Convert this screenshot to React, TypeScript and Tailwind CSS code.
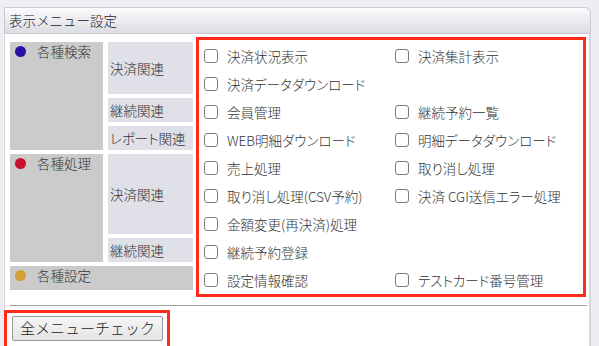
import React from "react";

type Item = { label: string } | null;

const rows: [Item, Item][] = [
  [{ label: "決済状況表示" }, { label: "決済集計表示" }],
  [{ label: "決済データダウンロード" }, null],
  [{ label: "会員管理" }, { label: "継続予約一覧" }],
  [{ label: "WEB明細ダウンロード" }, { label: "明細データダウンロード" }],
  [{ label: "売上処理" }, { label: "取り消し処理" }],
  [{ label: "取り消し処理(CSV予約)" }, { label: "決済 CGI送信エラー処理" }],
  [{ label: "金額変更(再決済)処理" }, null],
  [{ label: "継続予約登録" }, null],
  [{ label: "設定情報確認" }, { label: "テストカード番号管理" }],
];

function Check({ label }: { label: string }) {
  return (
    <label className="flex items-center gap-[9px] text-[13.5px] text-[#333] whitespace-nowrap">
      <span className="w-[14px] h-[14px] rounded-[3px] border border-[#7a7a7a] bg-white shrink-0" />
      {label}
    </label>
  );
}

function Category({ color, label }: { color: string; label: string }) {
  return (
    <div className="flex items-center gap-[11px] pl-[5px] pt-[1px] h-[18px] text-[13.5px] text-[#333]">
      <span className={`w-[11px] h-[11px] rounded-full ${color}`} />
      {label}
    </div>
  );
}

function Sub({ label, row }: { label: string; row: string }) {
  return (
    <div className={`bg-[#dfe0e8] flex items-center pl-[2px] text-[13.5px] text-[#333] whitespace-nowrap ${row}`}>
      {label}
    </div>
  );
}

export default function App() {
  return (
    <div
      className="w-[599px] h-[346px] overflow-hidden bg-[#ededf3] pt-[7px] pl-[4px] font-light [font-feature-settings:'palt']"
      style={{ fontFamily: '"Noto Sans CJK JP", "Noto Sans", sans-serif' }}
    >
      <div className="w-[587px]">
        <div className="h-[27px] rounded-tr-[6px] border border-[#c9c9d2] bg-gradient-to-b from-[#fbfbfd] to-[#dcdce4] flex items-center pl-[4px] text-[13.5px] text-[#222] [font-feature-settings:normal]">
          表示メニュー設定
        </div>
        <div className="bg-white border-l border-r-2 border-[#d6d6dc] h-[320px] pl-[5px] pr-[2px]">
          <div className="flex items-start pt-[3px]">
            <div className="grid grid-cols-[93px_85px] grid-rows-[repeat(9,24px)] gap-x-[5px] gap-y-[4px] mt-[5px]">
              <div className="bg-[#cbcbcb] row-start-1 row-span-4 col-start-1">
                <Category color="bg-[#2d10a8]" label="各種検索" />
              </div>
              <div className="bg-[#cbcbcb] row-start-5 row-span-4 col-start-1">
                <Category color="bg-[#c8102e]" label="各種処理" />
              </div>
              <div className="bg-[#cbcbcb] row-start-9 col-start-1 col-span-2">
                <Category color="bg-[#d4a035]" label="各種設定" />
              </div>
              <Sub label="決済関連" row="col-start-2 row-start-1 row-span-2" />
              <Sub label="継続関連" row="col-start-2 row-start-3" />
              <Sub label="レポート関連" row="col-start-2 row-start-4" />
              <Sub label="決済関連" row="col-start-2 row-start-5 row-span-3" />
              <Sub label="継続関連" row="col-start-2 row-start-8" />
            </div>
            <div className="ml-[3px] w-[390px] border-[3px] border-[#ff2a1a] pt-[2px] pl-[5px]">
              {rows.map(([a, b], i) => (
                <div key={i} className="grid grid-cols-[191px_1fr] h-[28px] items-center">
                  <div>{a && <Check label={a.label} />}</div>
                  <div>{b && <Check label={b.label} />}</div>
                </div>
              ))}
            </div>
          </div>
          <div className="mt-[8px] h-px bg-[#a0a0a0] w-[577px]" />
          <div className="mt-[4px] -ml-[6px] w-[166px] border-[3px] border-[#ff2a1a] pt-[3px] pl-[5px] pb-[6px]">
            <button className="w-[151px] h-[25px] rounded-[2px] border border-[#9a9a9a] bg-gradient-to-b from-[#f6f6f6] to-[#e4e4e4] text-[15px] text-[#222] flex items-center justify-center [font-feature-settings:normal]">
              全メニューチェック
            </button>
          </div>
        </div>
      </div>
    </div>
  );
}
